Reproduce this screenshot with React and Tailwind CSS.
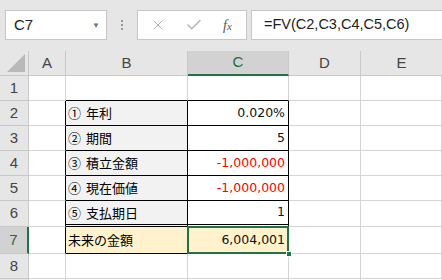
import { X, Check } from 'lucide-react'

const cols = 'grid grid-cols-[29px_37px_122px_101px_72px_81px]'
const grid = 'border-r border-b border-[#d4d4d4]'
const jp = { fontFamily: '"Noto Sans CJK JP", sans-serif' }

const rows = [
  { n: 2, mark: '①', label: '年利', value: '0.020%' },
  { n: 3, mark: '②', label: '期間', value: '5' },
  { n: 4, mark: '③', label: '積立金額', value: '-1,000,000', red: true },
  { n: 5, mark: '④', label: '現在価値', value: '-1,000,000', red: true },
  { n: 6, mark: '⑤', label: '支払期日', value: '1', last: true },
]

function RowHeader({ n, active }) {
  return (
    <div
      className={`flex items-center justify-center border-b border-[#c8c8c8] text-[15px] font-['Liberation_Sans',sans-serif] ${
        active
          ? 'bg-[#d2d2d2] text-[#1e6b41] border-r-2 border-r-[#217346]'
          : 'bg-[#e6e6e6] text-[#444] border-r border-r-[#c8c8c8]'
      }`}
    >
      {n}
    </div>
  )
}

export default function App() {
  return (
    <div className="w-[442px] h-[280px] overflow-hidden bg-white select-none">
      {/* Formula bar */}
      <div className="h-[51px] bg-[#e6e6e6] flex items-start pt-[10px] pl-[5px] gap-0">
        <div className="w-[102px] h-[30px] bg-white border border-[#c6c6c6] flex items-center pl-[8px] pr-[6px]">
          <span className="text-[15px] text-[#222] font-['Liberation_Sans',sans-serif]">C7</span>
          <span className="ml-auto text-[8px] text-[#777]">▼</span>
        </div>
        <div className="w-[30px] h-[30px] flex flex-col items-center justify-center gap-[2px]">
          <span className="w-[2px] h-[2px] bg-[#999]" />
          <span className="w-[2px] h-[2px] bg-[#999]" />
          <span className="w-[2px] h-[2px] bg-[#999]" />
        </div>
        <div className="w-[110px] h-[30px] bg-white border border-[#c6c6c6] flex items-center pl-[12px]">
          <X className="w-[16px] h-[16px] text-[#b4b4b4]" strokeWidth={1.5} />
          <Check className="w-[18px] h-[18px] text-[#b4b4b4] ml-[19px]" strokeWidth={2} />
          <span className="ml-[20px] text-[14px] italic text-[#555] font-['Liberation_Serif',serif]">
            f<span className="text-[11px]">x</span>
          </span>
        </div>
        <div className="flex-1 h-[30px] ml-[4px] bg-white border border-r-0 border-[#c6c6c6] flex items-center pl-[12px]">
          <span className="text-[14.5px] text-[#222] font-['Liberation_Sans',sans-serif]">=FV(C2,C3,C4,C5,C6)</span>
        </div>
      </div>

      {/* Column headers */}
      <div className={`${cols} h-[25px] text-[15px] text-[#444] font-['Liberation_Sans',sans-serif]`}>
        <div className="bg-[#e6e6e6] border-r border-b border-[#c8c8c8] relative">
          <svg className="absolute right-[3px] bottom-[3px]" width="18" height="18" viewBox="0 0 18 18">
            <polygon points="18,0 18,18 0,18" fill="#b9b9b9" />
          </svg>
        </div>
        <div className="bg-[#e6e6e6] border-r border-b border-[#c8c8c8] flex items-center justify-center">A</div>
        <div className="bg-[#e6e6e6] border-r border-b border-[#c8c8c8] flex items-center justify-center">B</div>
        <div className="bg-[#d2d2d2] border-r border-r-[#c8c8c8] border-b-2 border-b-[#217346] text-[#1e6b41] flex items-center justify-center">C</div>
        <div className="bg-[#e6e6e6] border-r border-b border-[#c8c8c8] flex items-center justify-center">D</div>
        <div className="bg-[#e6e6e6] border-b border-[#c8c8c8] flex items-center justify-center">E</div>
      </div>

      {/* Row 1 */}
      <div className={`${cols} h-[25px]`}>
        <RowHeader n={1} />
        <div className={grid} />
        <div className="border-r border-[#d4d4d4] border-b border-b-black" />
        <div className="border-r border-[#d4d4d4] border-b border-b-black" />
        <div className={grid} />
        <div className={grid} />
      </div>

      {/* Rows 2-6 */}
      {rows.map((r) => (
        <div key={r.n} className={`${cols} ${r.last ? 'h-[26px]' : 'h-[25px]'}`}>
          <RowHeader n={r.n} />
          <div className="border-b border-[#d4d4d4] border-r border-r-black" />
          <div
            className={`bg-[#f2f2f2] border-r border-r-black ${
              r.last ? 'border-b-[3px] border-double border-b-black' : 'border-b border-b-black'
            } flex items-center gap-[5px] pl-[2px] text-[13px] text-black`}
            style={jp}
          >
            <span>{r.mark}</span>
            <span>{r.label}</span>
          </div>
          <div
            className={`border-r border-r-black ${
              r.last ? 'border-b-[3px] border-double border-b-black' : 'border-b border-b-black'
            } flex items-center justify-end pr-[3px] text-[12.5px] font-['DejaVu_Sans',sans-serif] ${
              r.red ? 'text-[#ff0000]' : 'text-[#111]'
            }`}
          >
            {r.value}
          </div>
          <div className={grid} />
          <div className={grid} />
        </div>
      ))}

      {/* Row 7 */}
      <div className={`${cols} h-[27px]`}>
        <RowHeader n={7} active />
        <div className="border-b border-[#d4d4d4] border-r border-r-black" />
        <div
          className="bg-[#fff2cc] border-r border-r-black border-b border-b-black flex items-center pl-[2px] text-[13px] text-black"
          style={jp}
        >
          未来の金額
        </div>
        <div className="relative bg-[#fff2cc] border-r border-r-black border-b border-b-black flex items-center justify-end pr-[3px] text-[12.5px] text-[#111] font-['DejaVu_Sans',sans-serif]">
          6,004,001
          <div className="absolute -left-px -top-px -right-px -bottom-px border-2 border-[#217346]" />
          <div className="absolute -right-[4px] -bottom-[4px] w-[6px] h-[6px] bg-[#217346] border border-white" />
        </div>
        <div className={grid} />
        <div className={grid} />
      </div>

      {/* Row 8 and the top edge of row 9 */}
      <div className={`${cols} h-[25px]`}>
        <RowHeader n={8} />
        <div className={grid} />
        <div className={grid} />
        <div className={grid} />
        <div className={grid} />
        <div className={grid} />
      </div>
      <div className={`${cols} h-[25px]`}>
        <div className="bg-[#e6e6e6] border-r border-[#c8c8c8]" />
        <div className="border-r border-[#d4d4d4]" />
        <div className="border-r border-[#d4d4d4]" />
        <div className="border-r border-[#d4d4d4]" />
        <div className="border-r border-[#d4d4d4]" />
        <div />
      </div>
    </div>
  )
}
